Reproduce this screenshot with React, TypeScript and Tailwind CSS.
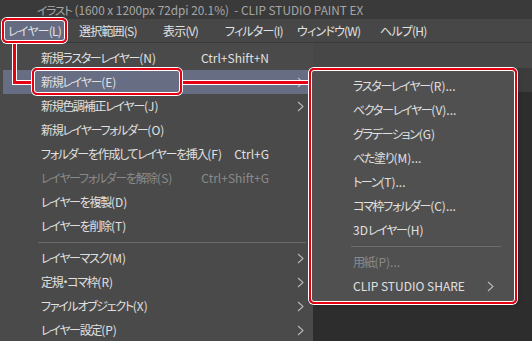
import React from 'react';

type Item =
  | { sep: true }
  | { label: string; shortcut?: string; arrow?: boolean; disabled?: boolean; active?: boolean; sep?: false };

const mainItems: Item[] = [
  { label: '新規ラスターレイヤー(N)', shortcut: 'Ctrl+Shift+N' },
  { label: '新規レイヤー(E)', arrow: true, active: true },
  { label: '新規色調補正レイヤー(J)', arrow: true },
  { label: '新規レイヤーフォルダー(O)' },
  { label: 'フォルダーを作成してレイヤーを挿入(F)', shortcut: 'Ctrl+G' },
  { label: 'レイヤーフォルダーを解除(S)', shortcut: 'Ctrl+Shift+G', disabled: true },
  { label: 'レイヤーを複製(D)' },
  { label: 'レイヤーを削除(T)' },
  { sep: true },
  { label: 'レイヤーマスク(M)', arrow: true },
  { label: '定規・コマ枠(R)', arrow: true },
  { label: 'ファイルオブジェクト(X)', arrow: true },
  { label: 'レイヤー設定(P)', arrow: true },
];

const subItems: Item[] = [
  { label: 'ラスターレイヤー(R)...' },
  { label: 'ベクターレイヤー(V)...' },
  { label: 'グラデーション(G)' },
  { label: 'べた塗り(M)...' },
  { label: 'トーン(T)...' },
  { label: 'コマ枠フォルダー(C)...' },
  { label: '3Dレイヤー(H)' },
  { sep: true },
  { label: '用紙(P)...', disabled: true },
  { label: 'CLIP STUDIO SHARE', arrow: true },
];

const menuBar = [
  { label: 'レイヤー(L)', w: 'w-[71px]', active: true },
  { label: '選択範囲(S)', w: 'w-[84px]' },
  { label: '表示(V)', w: 'w-[62px]' },
  { label: 'フィルター(I)', w: 'w-[72px]' },
  { label: 'ウィンドウ(W)', w: 'w-[83px]' },
  { label: 'ヘルプ(H)', w: 'w-[60px]' },
];

// Japanese runs are set tighter, latin runs keep their natural width
const Label = ({ text }: { text: string }) => {
  const parts = text.match(/[\u3000-\u30ff\u4e00-\u9fff・]+|[^\u3000-\u30ff\u4e00-\u9fff・]+/g) ?? [];
  return (
    <>
      {parts.map((p, i) =>
        /[\u3000-\u30ff\u4e00-\u9fff・]/.test(p) ? (
          <span key={i} className="tracking-[-1.3px]">
            {p}
          </span>
        ) : (
          <span key={i}>{p}</span>
        )
      )}
    </>
  );
};

const Chevron = () => (
  <svg width="7" height="11" viewBox="0 0 7 11" className="shrink-0">
    <polyline points="1,1 6,5.5 1,10" fill="none" stroke="#b8b8b8" strokeWidth="1.1" />
  </svg>
);

const RedBox = ({ className }: { className: string }) => (
  <div
    className={`absolute rounded-[5px] border-2 border-[#e60012] shadow-[0_0_0_1px_#ffffff,inset_0_0_0_1px_#ffffff] ${className}`}
  />
);

export default function App() {
  return (
    <div className="relative w-[532px] h-[341px] overflow-hidden bg-[#2d2d2d] text-[12px] font-['Noto_Sans_CJK_JP','Noto_Sans',sans-serif] [font-feature-settings:'palt']">
      {/* title bar */}
      <div className="h-[19px] bg-[#3a3a3a] pl-[37px] flex items-center text-[11.8px] text-[#a6a6a6] whitespace-pre leading-none">
        <Label text="イラスト (1600 x 1200px 72dpi 20.1%)  - CLIP STUDIO PAINT EX" />
      </div>

      {/* menu bar */}
      <div className="h-[23px] bg-[#474747] flex items-center pl-[5px] text-[#e2e2e2] tracking-[-0.8px]">
        {menuBar.map((m) => (
          <div key={m.label} className={`${m.w} shrink-0 h-[20px] flex items-center whitespace-nowrap`}>
            <span className={`h-full flex items-center pl-[3px] pr-[7px] ${m.active ? 'bg-[#656b81]' : ''}`}>{m.label}</span>
          </div>
        ))}
      </div>

      <div className="flex">
        {/* main dropdown */}
        <div className="w-[313px] h-[299px] bg-[#4a4a4a] border-t border-[#3a3a3a] pt-[3px] px-[3px] text-[#e0e0e0]">
          {mainItems.map((it, i) =>
            it.sep ? (
              <div key={i} className="h-[8px] flex items-center pl-[35px] pr-[4px]">
                <div className="h-px w-full bg-[#6c6c6c]" />
              </div>
            ) : (
              <div
                key={i}
                className={`h-[24px] flex items-center pl-[38px] ${it.active ? 'bg-[#676d83]' : ''} ${
                  it.disabled ? 'text-[#8a8a8a]' : ''
                }`}
              >
                <span className="flex-1 min-w-0 whitespace-nowrap">
                  <Label text={it.label} />
                </span>
                <span className="w-[90px] shrink-0 text-right whitespace-nowrap">{it.shortcut ?? ''}</span>
                <span className="w-[41px] shrink-0 flex justify-end pr-[6px]">{it.arrow ? <Chevron /> : null}</span>
              </div>
            )
          )}
        </div>

        {/* background to the right */}
        <div className="flex-1 flex flex-col">
          <div className="h-[26px] bg-[#474747] border-t border-[#3a3a3a]" />
          <div className="h-[24px] bg-[#3c3c3c]" />
          <div className="flex-1 bg-[#2d2d2d]" />
        </div>
      </div>

      {/* submenu */}
      <div className="absolute left-[311px] top-[70px] w-[204px] h-[232px] bg-[#505050] pt-[4px] px-[2px] text-[#e0e0e0] shadow-[2px_2px_4px_rgba(0,0,0,0.5)]">
        {subItems.map((it, i) =>
          it.sep ? (
            <div key={i} className="h-[8px] flex items-center pl-[38px] pr-[12px]">
              <div className="h-px w-full bg-[#6c6c6c]" />
            </div>
          ) : (
            <div key={i} className={`h-[24px] flex items-center pl-[40px] ${it.disabled ? 'text-[#8a8a8a]' : ''}`}>
              <span className="flex-1 min-w-0 whitespace-nowrap">
                <Label text={it.label} />
              </span>
              <span className="w-[30px] shrink-0 flex justify-end pr-[19px]">{it.arrow ? <Chevron /> : null}</span>
            </div>
          )
        )}
      </div>

      {/* annotation connectors */}
      <svg className="absolute left-0 top-0 pointer-events-none" width="532" height="341">
        <polyline points="14.5,42 14.5,82.5 33,82.5" fill="none" stroke="#ffffff" strokeWidth="5" />
        <line x1="180" y1="82.5" x2="310" y2="82.5" stroke="#ffffff" strokeWidth="5" />
        <polyline points="14.5,42 14.5,82.5 33,82.5" fill="none" stroke="#e60012" strokeWidth="3" />
        <line x1="180" y1="82.5" x2="310" y2="82.5" stroke="#e60012" strokeWidth="3" />
      </svg>

      {/* annotation boxes */}
      <RedBox className="left-[2px] top-[18px] w-[65px] h-[25px]" />
      <RedBox className="left-[32px] top-[68px] w-[150px] h-[27px]" />
      <RedBox className="left-[309px] top-[68px] w-[208px] h-[236px]" />
    </div>
  );
}
